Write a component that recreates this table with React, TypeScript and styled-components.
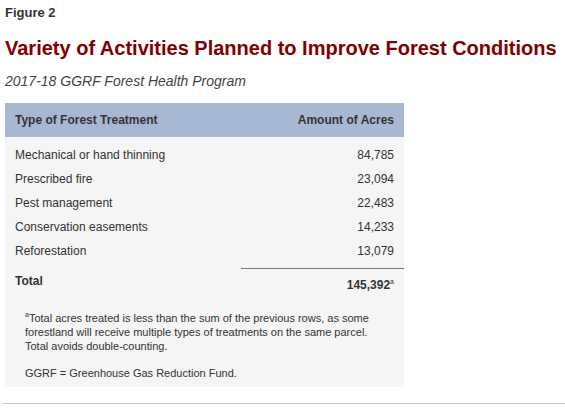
import React from "react";
import styled, { createGlobalStyle } from "styled-components";

const GlobalStyle = createGlobalStyle`
  body {
    margin: 0;
    background: #fff;
    font-family: "Liberation Sans", Arial, sans-serif;
    color: #333;
  }
`;

const Page = styled.div`
  padding: 5px 0 0 5px;
  width: 560px;
`;

const FigureLabel = styled.div`
  font-size: 13px;
  font-weight: bold;
  color: #333;
  line-height: 16px;
`;

const Title = styled.h1`
  margin: 15px 0 0;
  font-size: 20px;
  line-height: 24px;
  font-weight: bold;
  color: #7f0000;
`;

const Subtitle = styled.div`
  margin-top: 12px;
  font-size: 14px;
  line-height: 18px;
  font-style: italic;
  color: #444;
`;

const Panel = styled.div`
  margin-top: 13px;
  width: 399px;
  background: #f5f5f5;
  padding-bottom: 7px;
`;

const Header = styled.div`
  display: flex;
  justify-content: space-between;
  align-items: center;
  height: 34px;
  padding: 0 10px;
  background: #a9b8d2;
  font-size: 12px;
  font-weight: bold;
  color: #333;
`;

const Rows = styled.div`
  padding: 6px 10px 0;
`;

const Row = styled.div`
  display: flex;
  justify-content: space-between;
  height: 24px;
  align-items: center;
  font-size: 12px;
`;

const TotalRow = styled.div`
  display: flex;
  justify-content: space-between;
  margin-top: 5px;
  padding: 0 10px;
  font-size: 12px;
  line-height: 15px;
  font-weight: bold;
`;

const TotalLabel = styled.div`
  padding-top: 6px;
`;

const TotalValue = styled.div`
  width: 153px;
  margin-right: -10px;
  padding: 9px 10px 0 0;
  border-top: 1px solid #777;
  text-align: right;
`;

const Sup = styled.sup`
  font-size: 7px;
  font-weight: normal;
  vertical-align: 5px;
  line-height: 0;
`;

const Notes = styled.div`
  padding: 18px 22px 0 20px;
  font-size: 11px;
  line-height: 14px;
  color: #333;
`;

const Note = styled.p`
  margin: 0 0 13px;

  &:last-child {
    margin-bottom: 0;
  }
`;

const Rule = styled.hr`
  margin: 16px 0 0 -2px;
  border: 0;
  border-top: 1px solid #ccc;
`;

const data: [string, string][] = [
  ["Mechanical or hand thinning", "84,785"],
  ["Prescribed fire", "23,094"],
  ["Pest management", "22,483"],
  ["Conservation easements", "14,233"],
  ["Reforestation", "13,079"],
];

export default function App() {
  return (
    <>
      <GlobalStyle />
      <Page>
        <FigureLabel>Figure 2</FigureLabel>
        <Title>Variety of Activities Planned to Improve Forest Conditions</Title>
        <Subtitle>2017-18 GGRF Forest Health Program</Subtitle>
        <Panel>
          <Header>
            <span>Type of Forest Treatment</span>
            <span>Amount of Acres</span>
          </Header>
          <Rows>
            {data.map(([name, acres]) => (
              <Row key={name}>
                <span>{name}</span>
                <span>{acres}</span>
              </Row>
            ))}
          </Rows>
          <TotalRow>
            <TotalLabel>Total</TotalLabel>
            <TotalValue>
              145,392<Sup>a</Sup>
            </TotalValue>
          </TotalRow>
          <Notes>
            <Note>
              <Sup>a</Sup>Total acres treated is less than the sum of the previous rows, as some
              forestland will receive multiple types of treatments on the same parcel. Total
              avoids double-counting.
            </Note>
            <Note>GGRF = Greenhouse Gas Reduction Fund.</Note>
          </Notes>
        </Panel>
        <Rule />
      </Page>
    </>
  );
}
